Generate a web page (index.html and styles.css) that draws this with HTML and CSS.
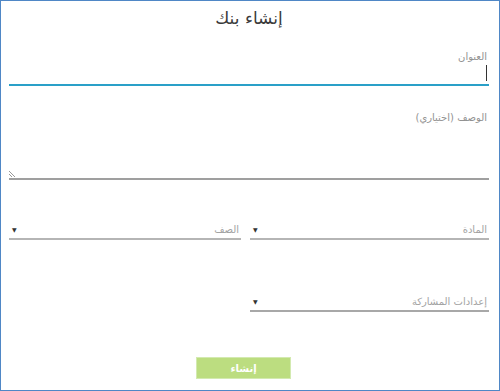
FILE: index.html
```html
<!DOCTYPE html>
<html lang="ar" dir="rtl">
<head>
    <meta charset="UTF-8">
    <meta name="viewport" content="width=device-width, initial-scale=1.0">
    <title>إنشاء بنك</title>
    <link rel="stylesheet" href="styles.css">
</head>
<body>
    <div class="dialog">
        <h1 class="title">إنشاء بنك</h1>

        <div class="field field-name">
            <label class="field-label">العنوان</label>
            <div class="text-input active">
                <span class="caret"></span>
            </div>
        </div>

        <div class="field field-desc">
            <label class="field-label">الوصف (اختياري)</label>
            <div class="text-area">
                <svg class="grip" width="6" height="6" viewBox="0 0 6 6">
                    <path d="M0 0 L6 6 M0 3 L3 6" stroke="#999" stroke-width="1" fill="none"/>
                </svg>
            </div>
        </div>

        <div class="select-row">
            <div class="select select-wide">
                <span class="select-text">المادة</span>
                <span class="arrow">▼</span>
            </div>
            <div class="select select-fill">
                <span class="select-text">الصف</span>
                <span class="arrow">▼</span>
            </div>
        </div>

        <div class="select-row share-row">
            <div class="select select-wide">
                <span class="select-text">إعدادات المشاركة</span>
                <span class="arrow">▼</span>
            </div>
        </div>

        <div class="actions">
            <button class="btn-create">إنشاء</button>
        </div>
    </div>
</body>
</html>
```

FILE: styles.css
```css
html, body {
    margin: 0;
    padding: 0;
    background-color: #fff;
}

body {
    font-family: "DejaVu Sans", "Noto Sans", sans-serif;
}

.dialog {
    box-sizing: border-box;
    width: 500px;
    height: 391px;
    border: 1px solid #4f87c6;
    padding: 0 10px 0 8px;
    direction: rtl;
}

.title {
    margin: 0;
    padding-top: 5px;
    font-size: 17px;
    line-height: 24px;
    font-weight: normal;
    text-align: center;
    color: #3a3a3a;
}

.field-label {
    display: block;
    font-size: 10px;
    line-height: 14px;
    color: #929292;
    padding-right: 2px;
}

.field-name {
    margin-top: 20px;
}

.text-input {
    height: 19px;
    border-bottom: 2px solid #2aa0c8;
}

.caret {
    display: block;
    width: 1px;
    height: 16px;
    margin-top: 1px;
    margin-right: 2px;
    background-color: #333;
}

.field-desc {
    margin-top: 25px;
}

.text-area {
    height: 53px;
    border-bottom: 2px solid #9f9f9f;
    display: flex;
    align-items: flex-end;
    justify-content: flex-end;
}

.grip {
    display: block;
    margin: 0 2px 1px 0;
}

.select-row {
    display: flex;
    gap: 9px;
    margin-top: 40px;
}

.share-row {
    margin-top: 52px;
}

.select {
    display: flex;
    align-items: center;
    justify-content: space-between;
    height: 18px;
    border-bottom: 2px solid #b5b5b5;
    padding: 0 2px 0 2px;
}

.select-wide {
    width: 235px;
}

.select-fill {
    flex: 1;
}

.share-row .select {
    border-bottom-color: #a8a8a8;
}

.select-text {
    font-size: 10px;
    color: #a3a3a3;
}

.arrow {
    font-size: 6px;
    color: #333;
    padding-left: 1px;
}

.actions {
    display: flex;
    justify-content: center;
    margin-top: 45px;
    padding-right: 11px;
}

.btn-create {
    width: 95px;
    height: 22px;
    border: 1px solid #d3eab0;
    background-color: #bcdd80;
    color: #fff;
    font-family: "DejaVu Sans", sans-serif;
    font-size: 10px;
    font-weight: bold;
    padding: 0;
}
```
